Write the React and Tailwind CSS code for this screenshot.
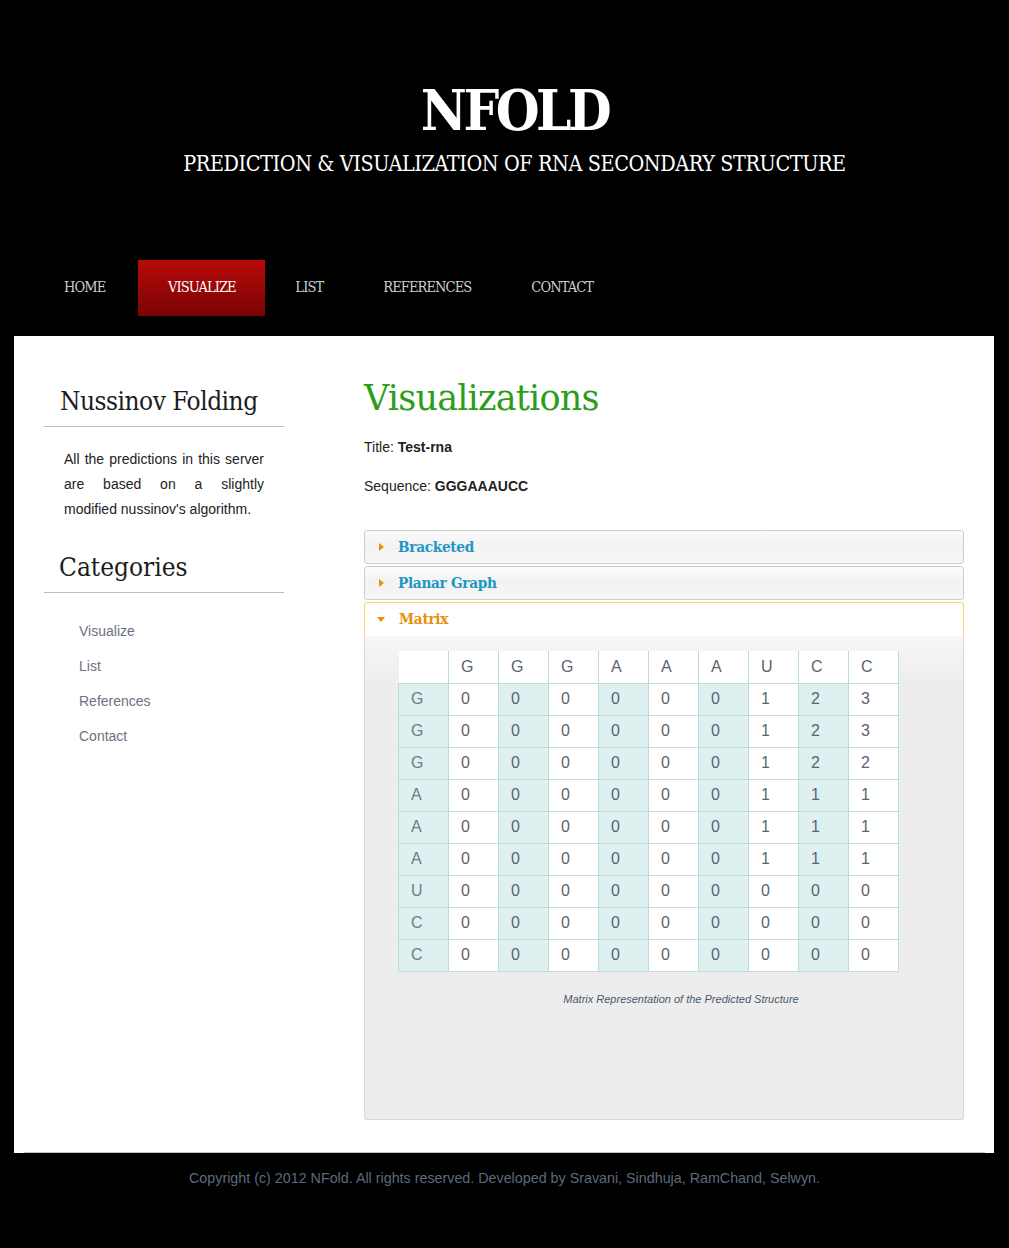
import React from 'react';

const slab = { fontFamily: '"DejaVu Serif", "Liberation Serif", serif' };
const slabNarrow = { fontFamily: '"DejaVu Serif Condensed", "DejaVu Serif", serif', fontStretch: 'condensed' };

const cols = ['G', 'G', 'G', 'A', 'A', 'A', 'U', 'C', 'C'];
const rows = [
    ['G', [0, 0, 0, 0, 0, 0, 1, 2, 3]],
    ['G', [0, 0, 0, 0, 0, 0, 1, 2, 3]],
    ['G', [0, 0, 0, 0, 0, 0, 1, 2, 2]],
    ['A', [0, 0, 0, 0, 0, 0, 1, 1, 1]],
    ['A', [0, 0, 0, 0, 0, 0, 1, 1, 1]],
    ['A', [0, 0, 0, 0, 0, 0, 1, 1, 1]],
    ['U', [0, 0, 0, 0, 0, 0, 0, 0, 0]],
    ['C', [0, 0, 0, 0, 0, 0, 0, 0, 0]],
    ['C', [0, 0, 0, 0, 0, 0, 0, 0, 0]],
];

const navItems = ['HOME', 'VISUALIZE', 'LIST', 'REFERENCES', 'CONTACT'];

function Arrow({ open }) {
    return open ? (
        <span className="w-0 h-0 border-l-[4px] border-r-[4px] border-t-[5px] border-transparent border-t-[#e8900a] ml-[12px] mr-[14px]" />
    ) : (
        <span className="w-0 h-0 border-t-[4px] border-b-[4px] border-l-[5px] border-transparent border-l-[#e8900a] ml-[14px] mr-[14px]" />
    );
}

export default function App() {
    return (
        <div className="bg-black w-[1009px] min-h-[1248px]" style={{ fontFamily: '"Liberation Sans", Arial, sans-serif' }}>
            {/* Header */}
            <header className="pt-[80px] pl-[20px] text-center text-white">
                <h1 className="text-[56px] leading-[60px] font-bold tracking-[-3.5px]" style={slabNarrow}>NFOLD</h1>
                <p className="mt-[10px] text-[21.4px] leading-[28px] tracking-[-0.4px]" style={slabNarrow}>
                    PREDICTION &amp; VISUALIZATION OF RNA SECONDARY STRUCTURE
                </p>
            </header>

            {/* Nav */}
            <nav className="mt-[82px] flex pl-[34px] h-[56px]" style={slabNarrow}>
                {navItems.map((item) => (
                    <a
                        key={item}
                        className={`flex items-center justify-center text-[14.5px] tracking-[-0.9px] ${
                            item === 'VISUALIZE'
                                ? 'ml-[3px] w-[127px] bg-gradient-to-b from-[#b80a0a] to-[#7a0404] text-white'
                                : 'px-[30px] text-[#c9ced6]'
                        }`}
                    >
                        {item}
                    </a>
                ))}
            </nav>

            {/* Content panel */}
            <main className="mt-[20px] mx-[14px] w-[980px] bg-white pt-[40px] pb-[33px]">
                <div className="flex">
                    {/* Sidebar */}
                    <aside className="w-[240px] ml-[30px] shrink-0">
                        <h2 className="pt-[10px] pl-[16px] text-[26px] leading-[30px] text-[#1c1c1c] tracking-[-0.5px] pb-[10px] border-b border-[#b3bfd1]" style={slabNarrow}>
                            Nussinov Folding
                        </h2>
                        <div className="mt-[20px] px-[20px] text-[14px] leading-[25px] text-[#222]">
                            <p className="[text-align-last:justify]">All the predictions in this server</p>
                            <p className="[text-align-last:justify]">are based on a slightly</p>
                            <p>modified nussinov's algorithm.</p>
                        </div>
                        <h2 className="mt-[30px] pl-[15px] text-[26px] leading-[30px] text-[#1c1c1c] pb-[10px] border-b border-[#b3bfd1]" style={slabNarrow}>
                            Categories
                        </h2>
                        <ul className="mt-[28px] pl-[35px] text-[14px] text-[#6b7280]">
                            {['Visualize', 'List', 'References', 'Contact'].map((l) => (
                                <li key={l} className="h-[35px] leading-[20px]">{l}</li>
                            ))}
                        </ul>
                    </aside>

                    {/* Main column */}
                    <section className="ml-[80px] w-[600px]">
                        <h1 className="pt-[2px] text-[35px] leading-[40px] text-[#2c9d1b] tracking-[-0.8px]" style={slab}>Visualizations</h1>
                        <p className="mt-[19px] text-[14px] text-[#222]">Title: <b>Test-rna</b></p>
                        <p className="mt-[18px] text-[14px] text-[#222]">Sequence: <b>GGGAAAUCC</b></p>

                        <div className="mt-[33px] flex flex-col gap-[2px]">
                            {['Bracketed', 'Planar Graph'].map((t) => (
                                <div key={t} className="h-[34px] flex items-center rounded-[3px] border border-[#cdcdcd] bg-gradient-to-b from-[#fbfbfb] via-[#f2f2f2] to-[#f7f7f7]">
                                    <Arrow />
                                    <span className="text-[15.2px] font-bold text-[#2196c4] tracking-[-0.3px]" style={slabNarrow}>{t}</span>
                                </div>
                            ))}
                            <div>
                                <div className="h-[34px] flex items-center bg-white rounded-t-[3px] border border-b-0 border-[#f7d66a]">
                                    <Arrow open />
                                    <span className="text-[15.2px] font-bold text-[#e8900a] tracking-[-0.3px]" style={slabNarrow}>Matrix</span>
                                </div>
                                <div className="h-[484px] px-[33px] pt-[15px] rounded-b-[3px] border border-t-0 border-[#d8d8d8] bg-gradient-to-b from-[#f7f7f7] via-[#ededed] via-[10%] to-[#ededed]">
                                    <table className="border-collapse text-[16px] text-[#5a6470]">
                                        <thead>
                                            <tr className="h-[32px] bg-white">
                                                <th className="w-[50px] border-r border-b border-[#bcdcd8]" />
                                                {cols.map((c, i) => (
                                                    <th key={i} className="w-[50px] font-normal text-left pl-[12px] border border-t-0 border-[#bcdcd8]">{c}</th>
                                                ))}
                                            </tr>
                                        </thead>
                                        <tbody>
                                            {rows.map(([label, vals], r) => (
                                                <tr key={r} className="h-[32px]">
                                                    <td className="pl-[12px] bg-[#dff0f0] text-[#778] border border-[#bcdcd8]">{label}</td>
                                                    {vals.map((v, i) => (
                                                        <td key={i} className={`pl-[12px] border border-[#bcdcd8] ${i % 2 === 1 ? 'bg-[#dff0f0]' : 'bg-white'}`}>{v}</td>
                                                    ))}
                                                </tr>
                                            ))}
                                        </tbody>
                                    </table>
                                    <p className="mt-[19px] w-[500px] pl-[66px] text-center text-[11px] italic text-[#4a5a6a]">
                                        Matrix Representation of the Predicted Structure
                                    </p>
                                </div>
                            </div>
                        </div>
                    </section>
                </div>
            </main>
            <div className="mx-[24px] h-px bg-[#b9c3d3] -mt-px relative" />

            <footer className="pt-[15px] text-center text-[14.3px] text-[#5c6a7e]">
                Copyright (c) 2012 NFold. All rights reserved. Developed by Sravani, Sindhuja, RamChand, Selwyn.
            </footer>
        </div>
    );
}
